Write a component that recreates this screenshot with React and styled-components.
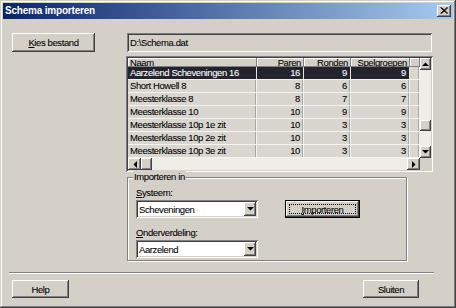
import React from 'react';
import styled, { createGlobalStyle } from 'styled-components';

const face = '#d4d0c8';
const raised = `inset -1px -1px #404040, inset 1px 1px #fff, inset -2px -2px #808080, inset 2px 2px ${face}`;
const sunken = `inset 1px 1px #808080, inset -1px -1px #fff, inset 2px 2px #404040, inset -2px -2px ${face}`;

const GlobalStyle = createGlobalStyle`
  html, body { margin: 0; padding: 0; background: ${face}; }
  body { width: 456px; height: 308px; overflow: hidden; }
`;

const Window = styled.div`
  box-sizing: border-box;
  width: 456px;
  height: 308px;
  padding: 3px;
  background: ${face};
  box-shadow: inset -1px -1px #404040, inset 1px 1px ${face}, inset -2px -2px #808080, inset 2px 2px #fff;
  display: flex;
  flex-direction: column;
  font-family: "Liberation Sans", Arial, sans-serif;
  font-size: 9.5px;
  letter-spacing: -0.4px;
  -webkit-text-stroke-width: 0.08px;
  color: #000;
`;

const TitleBar = styled.div`
  height: 16px;
  display: flex;
  align-items: center;
  padding: 0 2px 0 2px;
  background: linear-gradient(90deg, #0a246a, #a6caf0);
`;

const TitleText = styled.div`
  flex: 1;
  color: #fff;
  font-weight: bold;
  font-size: 10px;
  letter-spacing: -0.2px;
  -webkit-text-stroke-width: 0;
  line-height: 16px;
  white-space: nowrap;
`;

const CloseButton = styled.div`
  box-sizing: border-box;
  width: 14px;
  height: 12px;
  background: ${face};
  box-shadow: ${raised};
  display: flex;
  align-items: center;
  justify-content: center;
  padding-bottom: 1px;
`;

const Client = styled.div`
  flex: 1;
  display: flex;
  flex-direction: column;
`;

const TopArea = styled.div`
  display: flex;
  padding: 14px 0 0 9px;
`;

const LeftCol = styled.div`
  width: 83px;
`;

const RightCol = styled.div`
  width: 307px;
  margin-left: 31px;
  display: flex;
  flex-direction: column;
`;

const Button = styled.button`
  box-sizing: border-box;
  position: relative;
  width: ${p => p.w}px;
  height: ${p => p.h || 18}px;
  padding: 0;
  border: none;
  background: ${face};
  box-shadow: ${p => p.isDefault
    ? `inset 0 0 0 1px #000, inset -2px -2px #404040, inset 2px 2px #fff, inset -3px -3px #808080`
    : raised};
  font: inherit;
  letter-spacing: inherit;
  color: #000;
  display: flex;
  align-items: center;
  justify-content: center;
  ${p => p.isDefault && `
    &::after {
      content: '';
      position: absolute;
      inset: 4px;
      border: 1px dotted #000;
    }
  `}
`;

const U = styled.span`
  text-decoration: underline;
  text-underline-offset: 1px;
`;

const PathField = styled.div`
  box-sizing: border-box;
  margin-left: 1px;
  width: 305px;
  height: 19px;
  padding-left: 3px;
  background: ${face};
  box-shadow: ${sunken};
  display: flex;
  align-items: center;
`;

const Grid = styled.div`
  box-sizing: border-box;
  margin-top: 4px;
  width: 307px;
  padding: 2px;
  box-shadow: ${sunken};
  display: grid;
  grid-template-columns: 129px 47px 47px 59px 10px 11px;
  grid-template-rows: 9px repeat(7, 13px) 12px;
  background: ${face};
`;

const HeadCell = styled.div`
  box-sizing: border-box;
  background: ${face};
  box-shadow: inset -1px -1px #808080, inset 1px 1px #fff;
  padding: 0 3px 0 2px;
  line-height: 9px;
  text-align: ${p => (p.right ? 'right' : 'left')};
  white-space: nowrap;
  overflow: visible;
`;

const Cell = styled.div`
  box-sizing: border-box;
  background: ${p => (p.selected ? '#24242f' : '#d8d6cf')};
  color: ${p => (p.selected ? '#fff' : '#000')};
  border-right: 1px solid ${p => (p.selected ? '#e6e4de' : '#f4f3ef')};
  border-bottom: 1px solid #f4f3ef;
  box-shadow: ${p => (p.selected ? 'none' : 'inset -1px 0 #a8a69f')};
  padding: 0 3px 0 2px;
  line-height: 12px;
  text-align: ${p => (p.right ? 'right' : 'left')};
  white-space: nowrap;
  overflow: hidden;
`;

const VScroll = styled.div`
  grid-column: 6;
  grid-row: 1 / 9;
  display: flex;
  flex-direction: column;
  background: #eeede8;
`;

const HScroll = styled.div`
  grid-column: 1 / 6;
  grid-row: 9;
  display: flex;
  background: #eeede8;
`;

const Corner = styled.div`
  grid-column: 6;
  grid-row: 9;
  background: ${face};
`;

const ScrollButton = styled.div`
  box-sizing: border-box;
  flex: none;
  width: ${p => p.w}px;
  height: ${p => p.h}px;
  margin-top: ${p => p.mt || 0}px;
  background: ${face};
  box-shadow: ${raised};
  display: flex;
  align-items: center;
  justify-content: center;
`;

const Spacer = styled.div`
  flex: 1;
`;

const GroupBox = styled.div`
  position: relative;
  box-sizing: border-box;
  margin: 5px 0 0 1px;
  width: 280px;
  border: 1px solid #808080;
  box-shadow: inset 1px 1px #fff, 1px 1px #fff;
  padding: 8px 8px 2px 8px;
  display: grid;
  grid-template-columns: 122px auto;
  column-gap: 27px;
  align-items: center;
`;

const GroupLabel = styled.div`
  position: absolute;
  top: -7px;
  left: 5px;
  padding: 0 1px;
  background: ${face};
  line-height: 12px;
`;

const FieldLabel = styled.div`
  grid-column: 1;
  line-height: 13px;
  margin-top: ${p => p.mt || 0}px;
  margin-bottom: 1px;
`;

const Combo = styled.div`
  grid-column: 1;
  box-sizing: border-box;
  height: 18px;
  padding: 2px 2px 2px 3px;
  background: #fff;
  box-shadow: ${sunken};
  display: flex;
  align-items: center;
`;

const ComboText = styled.div`
  flex: 1;
`;

const DropButton = styled.div`
  box-sizing: border-box;
  width: 12px;
  height: 14px;
  background: ${face};
  box-shadow: ${raised};
  display: flex;
  align-items: center;
  justify-content: center;
`;

const Separator = styled.div`
  margin: 11px 19px 0 6px;
  height: 0;
  border-top: 1px solid #808080;
  border-bottom: 1px solid #fff;
`;

const ButtonRow = styled.div`
  display: flex;
  justify-content: space-between;
  padding: 6px 34px 0 9px;
`;

const Arrow = ({ dir }) => {
  const pts = {
    up: '0,4 7,4 3.5,0.5',
    down: '0,0 7,0 3.5,3.5',
    left: '4,0 4,7 0.5,3.5',
    right: '0,0 0,7 3.5,3.5',
  }[dir];
  const vertical = dir === 'up' || dir === 'down';
  return (
    <svg width={vertical ? 7 : 4} height={vertical ? 4 : 7} viewBox={vertical ? '0 0 7 4' : '0 0 4 7'}>
      <polygon points={pts} fill="#000" />
    </svg>
  );
};

const rows = [
  ['Aarzelend Scheveningen 16', 16, 9, 9],
  ['Short Howell 8', 8, 6, 6],
  ['Meesterklasse 8', 8, 7, 7],
  ['Meesterklasse 10', 10, 9, 9],
  ['Meesterklasse 10p 1e zit', 10, 3, 3],
  ['Meesterklasse 10p 2e zit', 10, 3, 3],
  ['Meesterklasse 10p 3e zit', 10, 3, 3],
];

export default function App() {
  return (
    <>
      <GlobalStyle />
      <Window>
        <TitleBar>
          <TitleText>Schema importeren</TitleText>
          <CloseButton>
            <svg width="8" height="7" viewBox="0 0 8 7">
              <path d="M0.5 0.5 L7 6.5 M1.5 0.5 L8 6.5 M7 0.5 L0.5 6.5 M8 0.5 L1.5 6.5" stroke="#000" strokeWidth="1" />
            </svg>
          </CloseButton>
        </TitleBar>
        <Client>
          <TopArea>
            <LeftCol>
              <Button w={83} h={19}><span><U>K</U>ies bestand</span></Button>
            </LeftCol>
            <RightCol>
              <PathField>D:\Schema.dat</PathField>
              <Grid>
                <HeadCell>Naam</HeadCell>
                <HeadCell right>Paren</HeadCell>
                <HeadCell right>Ronden</HeadCell>
                <HeadCell right>Spelgroepen</HeadCell>
                <HeadCell />
                <VScroll>
                  <ScrollButton w={11} h={12}><Arrow dir="up" /></ScrollButton>
                  <ScrollButton w={11} h={11} mt={50} />
                  <Spacer />
                  <ScrollButton w={11} h={12}><Arrow dir="down" /></ScrollButton>
                </VScroll>
                {rows.map((r, i) => (
                  <React.Fragment key={r[0]}>
                    <Cell selected={i === 0}>{r[0]}</Cell>
                    <Cell selected={i === 0} right>{r[1]}</Cell>
                    <Cell selected={i === 0} right>{r[2]}</Cell>
                    <Cell selected={i === 0} right>{r[3]}</Cell>
                    <Cell />
                  </React.Fragment>
                ))}
                <HScroll>
                  <ScrollButton w={13} h={12}><Arrow dir="left" /></ScrollButton>
                  <ScrollButton w={11} h={12} />
                  <Spacer />
                  <ScrollButton w={13} h={12}><Arrow dir="right" /></ScrollButton>
                </HScroll>
                <Corner />
              </Grid>
              <GroupBox>
                <GroupLabel>Importeren in</GroupLabel>
                <FieldLabel><U>S</U>ysteem:</FieldLabel>
                <div />
                <Combo>
                  <ComboText>Scheveningen</ComboText>
                  <DropButton><Arrow dir="down" /></DropButton>
                </Combo>
                <Button w={75} h={18} isDefault><span><U>I</U>mporteren</span></Button>
                <FieldLabel mt={8}><U>O</U>nderverdeling:</FieldLabel>
                <Combo>
                  <ComboText>Aarzelend</ComboText>
                  <DropButton><Arrow dir="down" /></DropButton>
                </Combo>
              </GroupBox>
            </RightCol>
          </TopArea>
          <Separator />
          <ButtonRow>
            <Button w={57}>Help</Button>
            <Button w={56}>Sluiten</Button>
          </ButtonRow>
        </Client>
      </Window>
    </>
  );
}
